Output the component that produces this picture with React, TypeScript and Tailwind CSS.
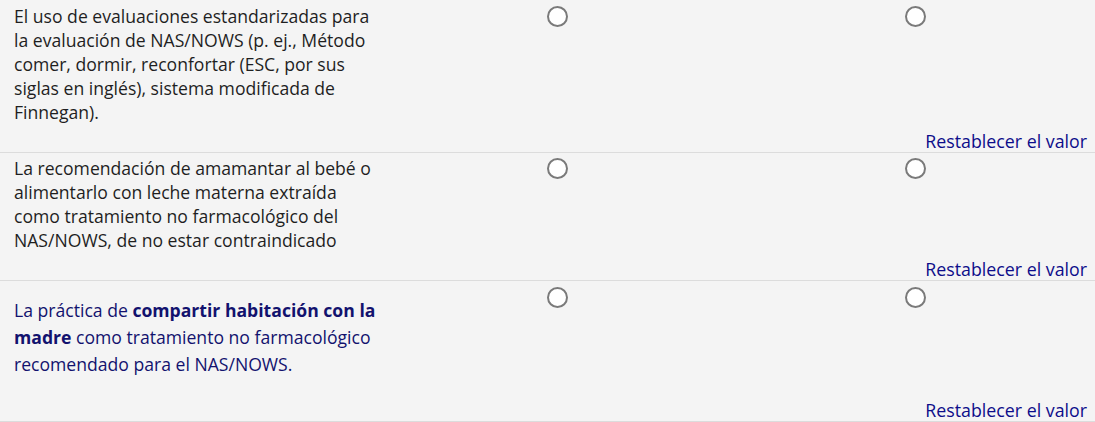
import React from "react";

function Radio({ ml, mt }: { ml: string; mt: string }) {
  return (
    <span
      className={`block shrink-0 w-[21px] h-[21px] rounded-full border-2 border-[#7a7a7a] bg-white ${ml} ${mt}`}
    />
  );
}

function Reset() {
  return (
    <div className="flex justify-end pr-[8px] -mb-[1px]">
      <a className="text-[17.8px] leading-[24px] text-[#0d0d8a] cursor-pointer">Restablecer el valor</a>
    </div>
  );
}

export default function App() {
  return (
    <div
      className="w-[1095px] h-[422px] bg-[#f4f4f4] text-[#1f1f1f] overflow-hidden"
      style={{ fontFamily: '"Open Sans", "Noto Sans", sans-serif' }}
    >
      {/* Row 1 */}
      <div className="h-[153px] border-b border-[#dcdcdc] flex flex-col justify-between">
        <div className="flex">
          <div className="w-[386px] pl-[14px] pt-[4px] text-[17.6px] leading-[24px]">
            El uso de evaluaciones estandarizadas para la evaluación de NAS/NOWS (p. ej., Método comer, dormir, reconfortar (ESC, por sus siglas en inglés), sistema modificada de Finnegan).
          </div>
          <Radio ml="ml-[161px]" mt="mt-[6px]" />
          <Radio ml="ml-[337px]" mt="mt-[6px]" />
        </div>
        <Reset />
      </div>

      {/* Row 2 */}
      <div className="h-[128px] border-b border-[#dcdcdc] flex flex-col justify-between">
        <div className="flex">
          <div className="w-[386px] pl-[14px] pt-[3px] text-[17.6px] leading-[24px]">
            La recomendación de amamantar al bebé o alimentarlo con leche materna extraída como tratamiento no farmacológico del NAS/NOWS, de no estar contraindicado
          </div>
          <Radio ml="ml-[161px]" mt="mt-[5px]" />
          <Radio ml="ml-[337px]" mt="mt-[5px]" />
        </div>
        <Reset />
      </div>

      {/* Row 3 */}
      <div className="h-[141px] border-b border-[#dcdcdc] flex flex-col justify-between">
        <div className="flex">
          <div className="w-[386px] pl-[14px] pt-[16px] text-[17.6px] leading-[27px] text-[#12126e]">
            La práctica de <strong className="font-bold">compartir habitación con la madre</strong> como tratamiento no farmacológico recomendado para el NAS/NOWS.
          </div>
          <Radio ml="ml-[161px]" mt="mt-[6px]" />
          <Radio ml="ml-[337px]" mt="mt-[6px]" />
        </div>
        <Reset />
      </div>
    </div>
  );
}
